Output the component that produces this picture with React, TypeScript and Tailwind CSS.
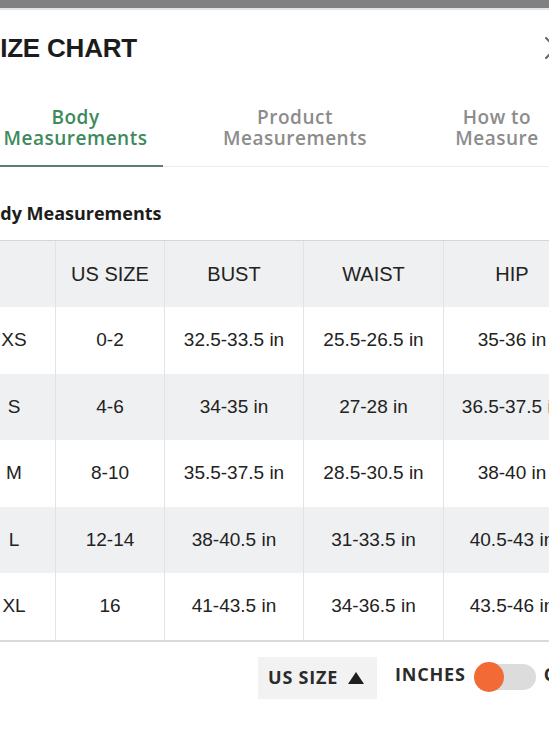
const COLS = [
  { key: 'size', label: '', w: 'w-[82px]' },
  { key: 'us', label: 'US SIZE', w: 'w-[109px]' },
  { key: 'bust', label: 'BUST', w: 'w-[139px]' },
  { key: 'waist', label: 'WAIST', w: 'w-[140px]' },
  { key: 'hip', label: 'HIP', w: 'w-[137px]' },
]

const ROWS = [
  ['XS', '0-2', '32.5-33.5 in', '25.5-26.5 in', '35-36 in'],
  ['S', '4-6', '34-35 in', '27-28 in', '36.5-37.5 in'],
  ['M', '8-10', '35.5-37.5 in', '28.5-30.5 in', '38-40 in'],
  ['L', '12-14', '38-40.5 in', '31-33.5 in', '40.5-43 in'],
  ['XL', '16', '41-43.5 in', '34-36.5 in', '43.5-46 in'],
]

export default function App() {
  return (
    <div className="w-[549px] h-[733px] overflow-hidden bg-white font-['Liberation_Sans',Arial,sans-serif] text-[#222]">
      {/* barra superior */}
      <div className="h-[8px] bg-[#808182]" />
      <div className="h-[2px] bg-[#e4e4e4]" />

      <div className="ml-[-27px] w-[640px]">
        {/* Cabecera */}
        <div className="flex items-center justify-between mt-[22px] pl-[10px] pr-[46px]">
          <h1 className="text-[26px] leading-[32px] font-bold text-[#1c1c1c] tracking-[-0.2px]">SIZE CHART</h1>
          <svg width="22" height="22" viewBox="0 0 22 22" className="shrink-0">
            <path d="M1 1 L21 21 M21 1 L1 21" stroke="#666" strokeWidth="2" strokeLinecap="round" />
          </svg>
        </div>

        {/* Tabs */}
        <div className="flex mt-[43px] ml-[15px] border-b border-[#ececec] font-['Open_Sans',sans-serif] text-[19px] leading-[21px] font-semibold tracking-[0.5px]">
          <div className="w-[175px] pb-[16px] text-center text-[#3d8a5d] border-b-2 border-[#5d7d6d] -mb-px">
            Body<br />Measurements
          </div>
          <div className="w-[264px] pb-[16px] text-center text-[#8c8c8c]">
            Product<br />Measurements
          </div>
          <div className="w-[140px] pb-[16px] text-center text-[#8c8c8c]">
            How to<br />Measure
          </div>
        </div>

        <h2 className="mt-[36px] pl-[4px] font-['Open_Sans',sans-serif] text-[18px] leading-[20px] font-bold text-[#1c1c1c]">Body Measurements</h2>

        {/* Tabla */}
        <div className="mt-[17px] border-t border-[#d6d6d6] border-b-2 border-b-[#dadada]">
          <div className="flex h-[66px] bg-[#eff0f1]">
            {COLS.map((c, i) => (
              <div key={c.key} className={`${c.w} shrink-0 ${i > 0 ? 'border-l border-[#e2e3e4]' : ''} flex items-center justify-center text-[20px]`}>
                {c.label}
              </div>
            ))}
            <div className="flex-1 border-l border-[#e2e3e4]" />
          </div>
          {ROWS.map((r, ri) => (
            <div key={r[0]} className={`flex h-[66.6px] ${ri % 2 === 1 ? 'bg-[#eff0f1]' : 'bg-white'}`}>
              {r.map((v, i) => (
                <div key={i} className={`${COLS[i].w} shrink-0 ${i > 0 ? 'border-l border-[#e2e3e4]' : ''} flex items-center justify-center text-[19px] whitespace-nowrap`}>
                  {v}
                </div>
              ))}
              <div className="flex-1 border-l border-[#e2e3e4]" />
            </div>
          ))}
        </div>

        {/* Controles */}
        <div className="flex items-center mt-[15px] ml-[285px] font-['Open_Sans',sans-serif] font-bold text-[18px] tracking-[0.8px] text-[#2b2b2b]">
          <div className="flex items-center h-[42px] w-[119px] pl-[10px] bg-[#f2f2f2]">
            <span>US SIZE</span>
            <svg width="16" height="12" viewBox="0 0 16 12" className="ml-[10px]">
              <path d="M8 0 L16 12 L0 12 Z" fill="#1e1e1e" />
            </svg>
          </div>
          <span className="ml-[18px] -mt-[6px]">INCHES</span>
          <div className="relative ml-[10px] -mt-[2px] w-[60px] h-[26px] rounded-full bg-[#dcdcdc]">
            <div className="absolute left-[-2px] top-[-2px] w-[30px] h-[30px] rounded-full bg-[#f26a36]" />
          </div>
          <span className="ml-[8px] -mt-[6px]">CM</span>
        </div>
      </div>
    </div>
  )
}
